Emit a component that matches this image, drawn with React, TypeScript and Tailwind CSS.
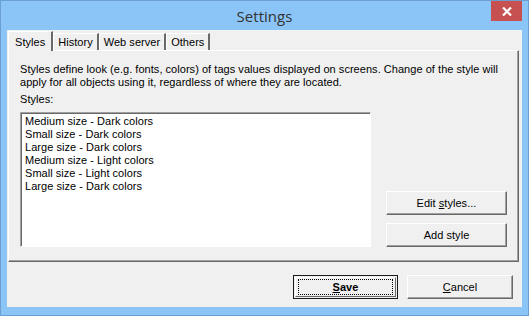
import React from 'react';

const items = [
  'Medium size - Dark colors',
  'Small size - Dark colors',
  'Large size - Dark colors',
  'Medium size - Light colors',
  'Small size - Light colors',
  'Large size - Dark colors',
];

const btn =
  'flex items-center justify-center bg-[#f0f0f0] text-black border border-t-white border-l-white border-b-[#696969] border-r-[#696969] shadow-[inset_-1px_-1px_0_#a0a0a0]';

const Tab: React.FC<{ label: string; active?: boolean }> = ({ label, active }) => (
  <div
    className={
      active
        ? 'relative z-10 -mb-[1px] h-[20px] px-[6px] pt-[4px] bg-[#f0f0f0] border-t border-l border-white border-r-2 border-r-[#696969]'
        : 'h-[17px] mt-[2px] px-[4px] pt-[2px] bg-[#f0f0f0] border-t border-l border-white border-r-2 border-r-[#696969]'
    }
  >
    {label}
  </div>
);

export default function App() {
  return (
    <div className="w-[529px] h-[316px] bg-[#8bc5f7] border border-[#6d9ed0] flex flex-col text-[11px] leading-[13px] tracking-[0.04px] text-black font-['Liberation_Sans',Arial,sans-serif] overflow-hidden">
      {/* title bar */}
      <div className="relative h-[29px] flex items-center justify-center">
        <span className="text-[15px] text-[#333] font-['Open_Sans',sans-serif] mt-[1px]">Settings</span>
        <div className="absolute right-[6px] top-0 w-[31px] h-[20px] bg-[#c75050] flex items-center justify-center">
          <svg width="10" height="9" viewBox="0 0 10 9">
            <path d="M1 0.5 L9 8.5 M9 0.5 L1 8.5" stroke="white" strokeWidth="2.2" />
          </svg>
        </div>
      </div>

      {/* client */}
      <div className="mx-[6px] h-[277px] bg-[#f0f0f0] flex flex-col">
        <div className="flex items-end pt-[1px] pl-[1px]">
          <Tab label="Styles" active />
          <Tab label="History" />
          <Tab label="Web server" />
          <Tab label="Others" />
        </div>

        <div className="ml-[1px] w-[511px] h-[212px] border border-t-white border-l-white border-r-[#696969] border-b-[#696969] shadow-[inset_-1px_-1px_0_#a0a0a0] px-[11px] pt-[12px]">
          <p>
            Styles define look (e.g. fonts, colors) of tags values displayed on screens. Change of the style will
            <br />
            apply for all objects using it, regardless of where they are located.
          </p>
          <p className="mt-[4px]">Styles:</p>
          <div className="flex mt-[6px]">
            <div className="w-[353px] h-[135px] bg-white border border-t-[#a0a0a0] border-l-[#a0a0a0] border-r-white border-b-white shadow-[inset_1px_1px_0_#696969] pl-[4px] pt-[2px]">
              {items.map((it, i) => (
                <div key={i}>{it}</div>
              ))}
            </div>
            <div className="ml-[15px] flex flex-col justify-end gap-[8px]">
              <div className={btn + ' w-[121px] h-[24px]'}>
                <span>
                  Edit <span className="underline">s</span>tyles...
                </span>
              </div>
              <div className={btn + ' w-[121px] h-[24px]'}>Add style</div>
            </div>
          </div>
        </div>

        <div className="flex justify-end gap-[9px] pr-[9px] mt-[13px]">
          <div className="w-[105px] h-[24px] border border-[#1a1a1a] p-[1px] bg-[#f0f0f0]">
            <div className="w-full h-full border border-t-white border-l-white border-b-[#696969] border-r-[#696969] flex items-center justify-center">
              <div className="w-[95px] h-[16px] border border-dotted border-black flex items-center justify-center font-bold">
                <span>
                  <span className="underline">S</span>ave
                </span>
              </div>
            </div>
          </div>
          <div className={btn + ' w-[106px] h-[24px]'}>
            <span>
              <span className="underline">C</span>ancel
            </span>
          </div>
        </div>
      </div>
    </div>
  );
}
